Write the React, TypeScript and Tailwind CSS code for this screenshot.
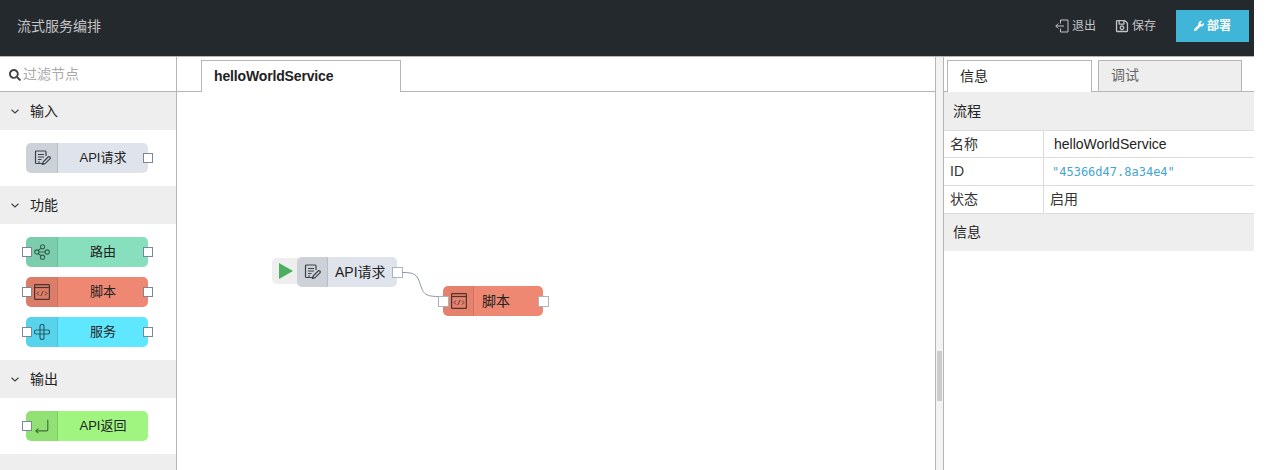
import React from 'react';
import { FaSearch, FaWrench, FaRegSave } from 'react-icons/fa';

const FONT = "font-['Liberation_Sans','Noto_Sans_CJK_SC',sans-serif]";

const DocIcon = () => (
  <svg viewBox="0 0 18 18" className="w-[18px] h-[18px]" fill="none" stroke="#3c434b" strokeWidth="1.2">
    <path d="M11.500 14.500H3.500a1 1 0 0 1-1-1V3a1 1 0 0 1 1-1h8.500a1 1 0 0 1 1 1v4" />
    <path d="M5 5.500h6M5 8h6M5 10.500h3.500M5 13h2" />
    <path d="M9.500 15.500l.6-2.500 5-5a1.200 1.200 0 0 1 1.800 1.800l-5 5z" />
  </svg>
);
const ShareIcon = () => (
  <svg viewBox="0 0 16 16" className="w-[16px] h-[16px]" fill="none" stroke="#35604f" strokeWidth="1.100">
    <circle cx="2.800" cy="8" r="2.100" />
    <circle cx="8.500" cy="2.800" r="2.100" />
    <circle cx="8.500" cy="13.200" r="2.100" />
    <circle cx="13.200" cy="8" r="2.100" />
    <path d="M4.900 8h6.200M4.300 6.500l2.700-2.300M4.300 9.500l2.700 2.300" />
  </svg>
);
const CodeIcon = () => (
  <svg viewBox="0 0 16 16" className="w-[16px] h-[16px]" fill="none" stroke="#4e342c" strokeWidth="1.200">
    <rect x="0.600" y="0.600" width="14.800" height="14.800" rx="0.600" />
    <path d="M0.600 3.500h14.800" />
    <path d="M5 7.500l-2 2 2 2M11 7.500l2 2-2 2M9.200 7l-2.400 5" strokeWidth="0.900" />
  </svg>
);
const CrossIcon = () => (
  <svg viewBox="0 0 16 16" className="w-[16px] h-[16px]" fill="none" stroke="#26606f" strokeWidth="1.200">
    <path d="M6 6V2.400a2 2 0 0 1 4 0V6h3.600a2 2 0 0 1 0 4H10v3.600a2 2 0 0 1-4 0V10H2.400a2 2 0 0 1 0-4z" />
    <path d="M6 6v4h4V6z" />
  </svg>
);
const ReturnIcon = () => (
  <svg viewBox="0 0 18 18" className="w-[16px] h-[16px]" fill="none" stroke="#43703a" strokeWidth="1.300">
    <path d="M15.500 2v11.500a1 1 0 0 1-1 1H2M5 12l-3 2.500L5 17" />
  </svg>
);
const ExitIcon = () => (
  <svg viewBox="0 0 14 14" className="w-[14px] h-[14px]" fill="none" stroke="#c4c4c4" strokeWidth="1">
    <path d="M5.500 4.500v-3.500h7.500v12H5.500V9.500" />
    <path d="M9 7H.8M3.300 4.500L.8 7l2.500 2.500" />
  </svg>
);
const Chevron = () => (
  <svg viewBox="0 0 8 5" className="w-[8px] h-[5px]" fill="none" stroke="#444" strokeWidth="1.200">
    <path d="M.5.800L4 4l3.500-3.200" />
  </svg>
);

const PalettePort = ({ side }: { side: 'left' | 'right' }) => (
  <span
    className={`absolute top-[10px] w-[10px] h-[10px] bg-white border border-[#7b8794] ${side === 'left' ? 'left-[-4px]' : 'right-[-5px]'}`}
  />
);

const FlowPort = ({ side }: { side: 'left' | 'right' }) => (
  <span
    className={`absolute top-[10px] w-[11px] h-[11px] bg-white border-[1.500px] border-[#a9b2be] ${side === 'left' ? 'left-[-5px]' : 'right-[-6px]'}`}
  />
);

const PaletteNode = ({ label, bg, icon, left, right }: { label: string; bg: string; icon: React.ReactNode; left?: boolean; right?: boolean }) => (
  <div className={`relative w-[122px] h-[30px] rounded-[5px] flex items-center text-[13px] text-[#222] ${bg}`}>
    <div className="w-[32px] h-full flex items-center justify-center bg-black/8 border-r border-black/10 rounded-l-[5px]">{icon}</div>
    <div className="flex-1 text-center">{label}</div>
    {left && <PalettePort side="left" />}
    {right && <PalettePort side="right" />}
  </div>
);

const SectionHeader = ({ title }: { title: string }) => (
  <div className="h-[38px] bg-[#eeeeee] flex items-center pl-[11px] text-[14px] text-[#222]">
    <Chevron />
    <span className="ml-[11px]">{title}</span>
  </div>
);

const Palette = () => (
  <aside className="w-[177px] shrink-0 border-r border-[#b5b5b5] flex flex-col">
    <div className="h-[35px] shrink-0 border-b border-[#b5b5b5] flex items-center pl-[9px] pt-[1px] text-[14px] text-[#aaaaaa]">
      <FaSearch className="w-[12px] h-[12px] text-[#444] mr-[2px]" />
      过滤节点
    </div>
    <SectionHeader title="输入" />
    <div className="h-[56px] pl-[26px] pt-[13px]">
      <PaletteNode label="API请求" bg="bg-[#dfe4ec]" icon={<DocIcon />} right />
    </div>
    <SectionHeader title="功能" />
    <div className="h-[136px] pl-[26px] pt-[13px] flex flex-col gap-[10px]">
      <PaletteNode label="路由" bg="bg-[#87dfbd]" icon={<ShareIcon />} left right />
      <PaletteNode label="脚本" bg="bg-[#ef8872]" icon={<CodeIcon />} left right />
      <PaletteNode label="服务" bg="bg-[#5fe7ff]" icon={<CrossIcon />} left right />
    </div>
    <SectionHeader title="输出" />
    <div className="h-[56px] pl-[26px] pt-[13px]">
      <PaletteNode label="API返回" bg="bg-[#9ff57f]" icon={<ReturnIcon />} left />
    </div>
    <div className="flex-1 bg-[#eeeeee]" />
  </aside>
);

const Workspace = () => (
  <main className="flex-1 flex flex-col min-w-0">
    <div className="h-[35px] shrink-0 border-b border-[#b5b5b5] pl-[24px] pt-[3px] flex">
      <div className="w-[200px] h-[32px] border border-b-0 border-[#b5b5b5] bg-white pl-[12px] pt-[6px] text-[14px] font-bold text-[#222] leading-[18px] tracking-[-0.15px]">
        helloWorldService
      </div>
    </div>
    <div className="relative flex-1">
      <div className="absolute left-[95px] top-[166px] w-[30px] h-[26px] bg-[#eeeeee] rounded-l-[5px] flex items-center pl-[7px]">
        <svg viewBox="0 0 14 16" className="w-[14px] h-[16px]"><polygon points="0,0 14,8 0,16" fill="#4caf60" /></svg>
      </div>
      <div className="absolute left-[120px] top-[165px] w-[100px] h-[30px] rounded-[5px] bg-[#dfe4ec] flex items-center text-[14px] text-[#222]">
        <div className="w-[31px] h-full flex items-center justify-center bg-black/8 border-r border-black/10 rounded-l-[5px]"><DocIcon /></div>
        <span className="ml-[7px]">API请求</span>
        <FlowPort side="right" />
      </div>
      <svg className="absolute left-[225px] top-[175px] w-[40px] h-[34px]" viewBox="0 0 40 34" fill="none" stroke="#8b93a3" strokeWidth="1">
        <path d="M0 5.500c13 0 15 2 18 11s4 13 18 13" />
      </svg>
      <div className="absolute left-[266px] top-[194px] w-[100px] h-[30px] rounded-[5px] bg-[#ef8872] flex items-center text-[14px] text-[#222]">
        <div className="w-[31px] h-full flex items-center justify-end pr-[6px] bg-black/4 border-r border-black/10 rounded-l-[5px]"><CodeIcon /></div>
        <span className="ml-[8px]">脚本</span>
        <FlowPort side="left" />
        <FlowPort side="right" />
      </div>
    </div>
  </main>
);

const Row = ({ name, height, children, last }: { name: string; height: string; children: React.ReactNode; last?: boolean }) => (
  <div className={`flex ${height} text-[14px] text-[#333] ${last ? '' : 'border-b border-[#dddddd]'}`}>
    <div className="w-[100px] pl-[6px] border-r border-[#dddddd] flex items-center">{name}</div>
    <div className="flex-1 flex items-center">{children}</div>
  </div>
);

const InfoPanel = () => (
  <aside className="w-[310px] shrink-0 flex flex-col">
    <div className="h-[35px] shrink-0 border-b border-[#b5b5b5] pl-[3px] pt-[3px] flex gap-[6px]">
      <div className="w-[145px] h-[32px] border border-b-0 border-[#b5b5b5] bg-white pl-[12px] pt-[5px] text-[14px] text-[#222] leading-[20px]">信息</div>
      <div className="w-[144px] h-[31px] border border-b-0 border-[#b5b5b5] bg-[#eeeeee] pl-[12px] pt-[4px] text-[14px] text-[#666] leading-[20px]">调试</div>
    </div>
    <div className="h-[39px] bg-[#eeeeee] border-b border-[#dddddd] flex items-center pl-[9px] text-[14px] text-[#222]">流程</div>
    <Row name="名称" height="h-[27px]"><span className="pl-[10px] text-[#222]">helloWorldService</span></Row>
    <Row name="ID" height="h-[28px]"><span className="pl-[8px] text-[12px] text-[#46a6cf] font-['DejaVu_Sans_Mono',monospace]">"45366d47.8a34e4"</span></Row>
    <Row name="状态" height="h-[27px]" last><span className="pl-[6px]">启用</span></Row>
    <div className="h-[38px] bg-[#eeeeee] border-t border-[#dddddd] flex items-center pl-[9px] text-[14px] text-[#222]">信息</div>
  </aside>
);

export default function App() {
  return (
    <div className={`w-[1254px] h-[470px] overflow-hidden flex flex-col bg-white ${FONT}`}>
      <header className="h-[57px] shrink-0 bg-[#24292e] border-b border-[#b5b5b5] flex items-center justify-between pl-[17px] pr-[5px] pb-[4px]">
        <span className="text-[14px] text-[#c4c4c4]">流式服务编排</span>
        <div className="flex items-center text-[12px] text-[#c4c4c4]">
          <span className="flex items-center gap-[3px]"><ExitIcon />退出</span>
          <span className="flex items-center gap-[3px] ml-[19px]"><FaRegSave className="w-[14px] h-[14px]" />保存</span>
          <span className="ml-[20px] w-[73px] h-[32px] bg-[#40b5d8] text-white font-bold flex items-center justify-center gap-[3px]">
            <FaWrench className="w-[10px] h-[10px]" />部署
          </span>
        </div>
      </header>
      <div className="flex-1 flex min-h-0">
        <Palette />
        <Workspace />
        <div className="w-[9px] shrink-0 bg-[#f3f3f3] border-x border-[#b5b5b5] flex items-end justify-center pb-[69px]">
          <div className="w-[5px] h-[50px] bg-[#cccccc]" />
        </div>
        <InfoPanel />
      </div>
    </div>
  );
}
